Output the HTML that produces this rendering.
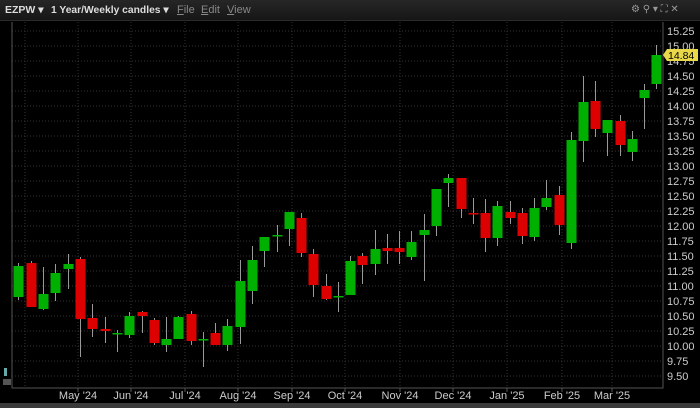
<!DOCTYPE html>
<html><head><meta charset="utf-8"><style>
body{margin:0;width:700px;height:408px;background:#000;overflow:hidden;font-family:"Liberation Sans",sans-serif}
#hdr{position:absolute;left:0;top:0;width:700px;height:20px;background:linear-gradient(#262626,#161616);border-bottom:1px solid #2a2a2a}
#hdr span{position:absolute;top:4px;font-size:11px;color:#ddd;white-space:nowrap}
svg{position:absolute;left:0;top:0}
</style></head><body>
<div id="hdr">
<span style="left:5px;font-weight:bold;font-size:10.5px">EZPW ▾</span>
<span style="left:51px;font-weight:bold;font-size:10.3px">1 Year/Weekly candles ▾</span>
<span style="left:177px;color:#888"><u>F</u>ile</span>
<span style="left:201px;color:#888"><u>E</u>dit</span>
<span style="left:227px;color:#888"><u>V</u>iew</span>
<span style="left:631px;color:#999;font-size:10px">⚙ ⚲ ▾ ⛶ ✕</span>
</div>
<svg id="s" width="700" height="408"></svg>
<script>
var s=document.getElementById('s'),h='';
for(var i=0;i<=23;i++){var y=31+i*15;h+='<line x1="12" y1="'+y+'" x2="663" y2="'+y+'" stroke="#333" stroke-dasharray="1,2"/>';
var p=(15.25-i*0.25).toFixed(2);h+='<text x="667" y="'+(y+4)+'" fill="#ccc" font-size="11">'+p+'</text>';}
var mx=[25,78,131,185,238,292,345,400,453,507,562,612],ml=["","May '24","Jun '24","Jul '24","Aug '24","Sep '24","Oct '24","Nov '24","Dec '24","Jan '25","Feb '25","Mar '25"];
for(var i=0;i<mx.length;i++){h+='<line x1="'+mx[i]+'" y1="22" x2="'+mx[i]+'" y2="388" stroke="#333" stroke-dasharray="1,2"/>';
if(ml[i])h+='<line x1="'+mx[i]+'" y1="388" x2="'+mx[i]+'" y2="392" stroke="#555"/><text x="'+mx[i]+'" y="399" fill="#ccc" font-size="11" text-anchor="middle">'+ml[i]+'</text>';}
h+='<path d="M12 22V388H663V22" fill="none" stroke="#555"/>';
var c=[[18,266,297,263,300,1],[31,263,307,261,307,0],[43,294,309,267,310,1],[55,273,293,264,301,1],[68,264,269,254,289,1],[80,259,319,257,357,0],[92,318,329,304,337,0],[105,329,331,317,343,0],[117,333,334,330,352,1],[129,316,335,312,338,1],[142,312,316,311,333,0],[154,320,343,318,345,0],[166,339,345,317,352,1],[178,317,339,316,339,1],[191,314,341,311,345,0],[203,339,340,332,367,1],[215,333,345,323,345,0],[227,326,345,319,351,1],[240,281,327,260,344,1],[252,260,291,246,304,1],[264,237,251,237,267,1],[277,235,236,225,252,1],[289,212,229,212,246,1],[301,218,253,213,257,0],[313,254,285,249,297,0],[326,286,299,274,300,0],[338,296,297,282,312,1],[350,261,295,256,295,1],[362,256,265,253,284,0],[375,249,264,230,275,1],[387,248,251,234,264,0],[399,248,252,231,264,0],[411,242,257,231,260,1],[424,230,235,214,281,1],[436,189,226,189,236,1],[448,178,183,174,207,1],[461,178,209,178,218,0],[473,213,214,198,224,0],[485,213,238,199,252,0],[497,206,238,201,246,1],[510,212,218,201,224,0],[522,213,236,208,244,0],[534,208,237,198,241,1],[546,198,207,180,210,1],[559,195,225,186,235,0],[571,140,243,132,249,1],[583,102,141,76,162,1],[595,101,129,81,137,0],[607,120,133,120,156,1],[620,121,145,115,156,0],[632,139,152,131,161,1],[644,90,98,84,129,1],[656,55,84,45,89,1]];
c.forEach(function(k){var col=k[5]?'#00b000':'#dd0000';
h+='<line x1="'+(k[0]+.5)+'" y1="'+k[3]+'" x2="'+(k[0]+.5)+'" y2="'+k[4]+'" stroke="#999"/>';
h+='<rect x="'+(k[0]-4.5)+'" y="'+k[1]+'" width="10" height="'+Math.max(1.5,k[2]-k[1])+'" fill="'+col+'"/>';});
h+='<path d="M663 55L667 49H698V61H667Z" fill="#e8d84a"/><text x="668" y="59" fill="#000" font-size="10.5">14.84</text>';
h+='<rect x="0" y="403" width="700" height="5" fill="#3a3a3a"/>';
h+='<rect x="4" y="368" width="3" height="8" fill="#6aa"/><rect x="3" y="379" width="8" height="6" fill="#555"/>';
s.innerHTML=h;
</script>
</body></html>
